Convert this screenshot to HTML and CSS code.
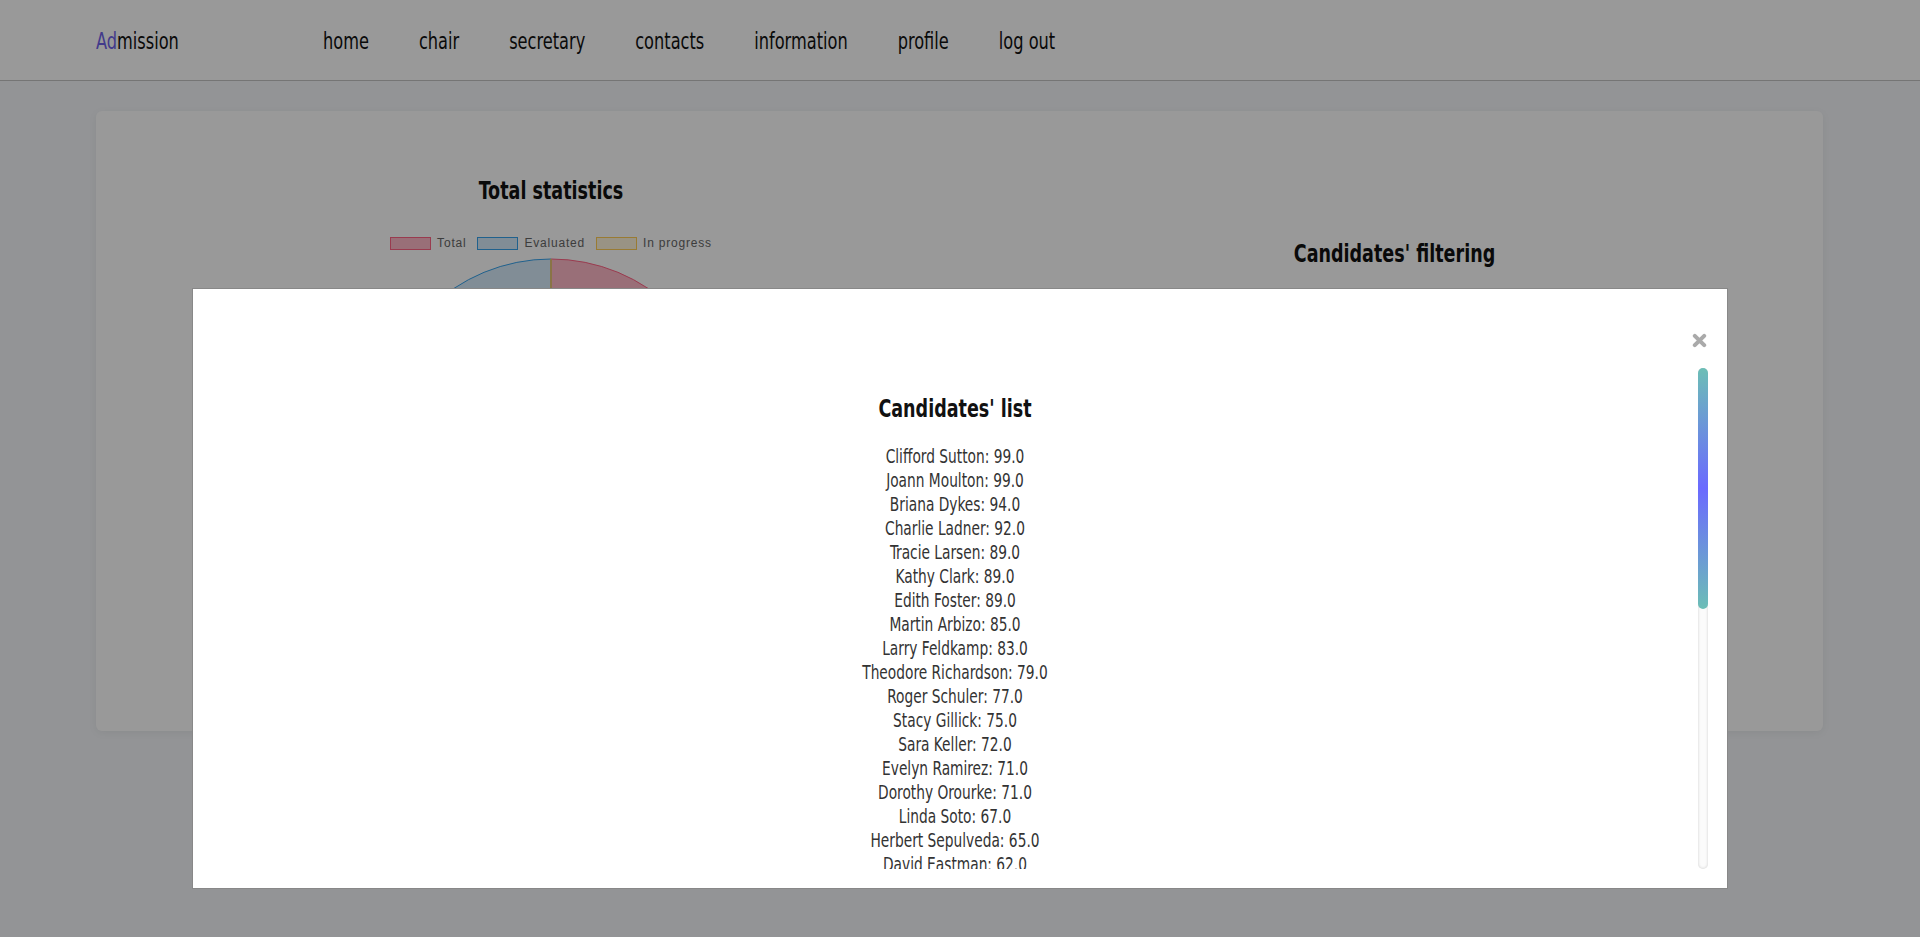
FILE: index.html
```html
<!DOCTYPE html>
<html lang="en">
<head>
<meta charset="utf-8">
<title>Admission</title>
<link rel="stylesheet" href="styles.css">
</head>
<body>
<header class="topbar">
  <div class="brand"><span class="brand-accent">Ad</span>mission</div>
  <nav class="nav">
    <a class="nav-link" href="#">home</a>
    <a class="nav-link" href="#">chair</a>
    <a class="nav-link" href="#">secretary</a>
    <a class="nav-link" href="#">contacts</a>
    <a class="nav-link" href="#">information</a>
    <a class="nav-link" href="#">profile</a>
    <a class="nav-link" href="#">log out</a>
  </nav>
</header>

<main class="page">
  <section class="card">
    <div class="col col-stats">
      <h2 class="section-title">Total statistics</h2>
      <ul class="legend">
        <li class="legend-item"><span class="swatch swatch-total"></span>Total</li>
        <li class="legend-item"><span class="swatch swatch-eval"></span>Evaluated</li>
        <li class="legend-item"><span class="swatch swatch-prog"></span>In progress</li>
      </ul>
      <svg class="pie" width="352" height="352" viewBox="-176 -176 352 352">
        <path d="M0,0 L0,-175 A175,175 0 0 1 0,175 Z" fill="rgba(255,99,132,0.45)" stroke="rgb(255,99,132)" stroke-width="1"/>
        <path d="M0,0 L0,175 A175,175 0 0 1 0,-175 Z" fill="rgba(54,162,235,0.2)" stroke="rgb(54,162,235)" stroke-width="1"/>
        <path d="M0,0 L0,-175" stroke="rgb(255,206,86)" stroke-width="1.5"/>
      </svg>
    </div>
    <div class="col col-filter">
      <h2 class="section-title">Candidates' filtering</h2>
    </div>
  </section>
</main>

<div class="overlay"></div>

<div class="modal">
  <div class="modal-head">
    <button class="close-btn" aria-label="close">
      <svg width="15" height="15" viewBox="0 0 15 15"><path d="M2.8 2.8 L12.2 12.2 M12.2 2.8 L2.8 12.2" stroke="#aaaaaa" stroke-width="4" stroke-linecap="round"/></svg>
    </button>
  </div>
  <div class="modal-body">
    <div class="list-viewport">
      <h2 class="list-title">Candidates' list</h2>
      <div class="cand-list">
        <div class="cand">Clifford Sutton: 99.0</div>
        <div class="cand">Joann Moulton: 99.0</div>
        <div class="cand">Briana Dykes: 94.0</div>
        <div class="cand">Charlie Ladner: 92.0</div>
        <div class="cand">Tracie Larsen: 89.0</div>
        <div class="cand">Kathy Clark: 89.0</div>
        <div class="cand">Edith Foster: 89.0</div>
        <div class="cand">Martin Arbizo: 85.0</div>
        <div class="cand">Larry Feldkamp: 83.0</div>
        <div class="cand">Theodore Richardson: 79.0</div>
        <div class="cand">Roger Schuler: 77.0</div>
        <div class="cand">Stacy Gillick: 75.0</div>
        <div class="cand">Sara Keller: 72.0</div>
        <div class="cand">Evelyn Ramirez: 71.0</div>
        <div class="cand">Dorothy Orourke: 71.0</div>
        <div class="cand">Linda Soto: 67.0</div>
        <div class="cand">Herbert Sepulveda: 65.0</div>
        <div class="cand">David Eastman: 62.0</div>
        <div class="cand">Gloria Hensley: 61.0</div>
        <div class="cand">Ronald Weaver: 60.0</div>
        <div class="cand">Nancy Pruitt: 58.0</div>
        <div class="cand">Victor Almond: 57.0</div>
        <div class="cand">Janet Holloway: 55.0</div>
        <div class="cand">Dennis Carver: 54.0</div>
        <div class="cand">Marilyn Booth: 52.0</div>
        <div class="cand">Henry Whitlock: 51.0</div>
        <div class="cand">Paula Dunbar: 49.0</div>
        <div class="cand">Gerald Mercer: 47.0</div>
        <div class="cand">Alice Norris: 46.0</div>
        <div class="cand">Wayne Fulton: 44.0</div>
        <div class="cand">Carol Stanley: 42.0</div>
        <div class="cand">Eugene Porter: 40.0</div>
        <div class="cand">Rita Callahan: 39.0</div>
        <div class="cand">Frank Dalton: 37.0</div>
        <div class="cand">Joyce Whitaker: 35.0</div>
        <div class="cand">Walter Pierce: 33.0</div>
        <div class="cand">Lois Garner: 30.0</div>
        <div class="cand">Howard Tate: 28.0</div>
        <div class="cand">Irene Mosley: 25.0</div>
        <div class="cand">Samuel Grady: 21.0</div>
      </div>
    </div>
    <div class="scrollbar"><div class="scroll-thumb"></div></div>
  </div>
</div>
</body>
</html>
```

FILE: styles.css
```css
* { box-sizing: border-box; }

html, body {
  margin: 0;
  padding: 0;
}

body {
  background: #f5f7fa;
  font-family: "DejaVu Sans Condensed", "DejaVu Sans", sans-serif;
  font-stretch: condensed;
  color: #222;
  height: 937px;
  overflow: hidden;
}

/* ---------- header ---------- */
.topbar {
  height: 81px;
  background: #ffffff;
  border-bottom: 1px solid #c4c4c4;
  display: flex;
  align-items: center;
  padding: 0 96px;
}

.brand {
  width: 227px;
  flex: none;
  font-size: 18px;
  color: #111;
  transform: scaleY(1.3);
}

.brand-accent { color: #6f62e8; }

.nav {
  display: flex;
  gap: 50px;
}

.nav-link {
  font-size: 18px;
  color: #111;
  text-decoration: none;
  transform: scaleY(1.3);
}

/* ---------- card ---------- */
.page {
  padding: 30px 97px 0 96px;
}

.card {
  height: 620px;
  background: #ffffff;
  border-radius: 6px;
  box-shadow: 0 2px 8px rgba(0, 0, 0, 0.06);
  padding: 0 20px;
  display: grid;
  grid-template-columns: 870px 1fr;
}

.col {
  display: flex;
  flex-direction: column;
  align-items: center;
}

.col-stats { padding-top: 65px; }
.col-filter { padding-top: 128px; }

.section-title {
  margin: 0;
  font-size: 19.5px;
  line-height: 29px;
  font-weight: bold;
  color: #111;
  transform: scaleY(1.28);
}

.legend {
  list-style: none;
  margin: 32px 0 0;
  padding: 0;
  display: flex;
  gap: 11px;
  font-family: "Liberation Sans", Arial, sans-serif;
  font-stretch: normal;
  font-size: 12px;
  line-height: 13px;
  letter-spacing: 0.8px;
  color: #666;
}

.legend-item {
  display: flex;
  align-items: center;
  gap: 6px;
}

.swatch {
  display: inline-block;
  width: 41px;
  height: 13px;
  border: 1px solid;
}

.swatch-total { background: rgba(255, 99, 132, 0.45); border-color: rgb(255, 99, 132); }
.swatch-eval { background: rgba(54, 162, 235, 0.2); border-color: rgb(54, 162, 235); }
.swatch-prog { background: rgba(255, 206, 86, 0.2); border-color: rgb(255, 206, 86); }

.pie {
  display: block;
  margin-top: 8px;
}

/* ---------- overlay + modal ---------- */
.overlay {
  position: fixed;
  inset: 0;
  background: rgba(0, 0, 0, 0.4);
}

.modal {
  position: fixed;
  left: 10%;
  top: 288px;
  width: 80%;
  height: 601px;
  background: #ffffff;
  border: 1px solid #888;
  padding: 44px 19px 19px;
  display: flex;
  flex-direction: column;
}

.modal-head {
  display: flex;
  justify-content: flex-end;
  height: 15px;
  margin-bottom: 20px;
  padding-right: 1px;
}

.close-btn {
  border: 0;
  background: none;
  padding: 0;
  width: 15px;
  height: 15px;
  cursor: pointer;
  display: block;
}

.close-btn svg { display: block; }

.modal-body {
  height: 501px;
  display: flex;
}

.list-viewport {
  flex: 1;
  overflow: hidden;
  text-align: center;
  padding-top: 26px;
}

.scrollbar {
  width: 10px;
  flex: none;
  background: #fbfbfb;
  border-radius: 10px;
  box-shadow: inset 0 0 3px rgba(0, 0, 0, 0.18);
}

.scroll-thumb {
  height: 241px;
  border-radius: 10px;
  background: linear-gradient(to bottom, #6cbeb6 0%, #6b6aff 50%, #6cbeb6 100%);
}

.list-title {
  margin: 0 0 22px;
  font-size: 19.5px;
  line-height: 29px;
  font-weight: bold;
  color: #111;
  transform: scaleY(1.28);
}

.cand {
  font-size: 15.3px;
  line-height: 24px;
  color: #333;
  transform: scaleY(1.25);
}
```
